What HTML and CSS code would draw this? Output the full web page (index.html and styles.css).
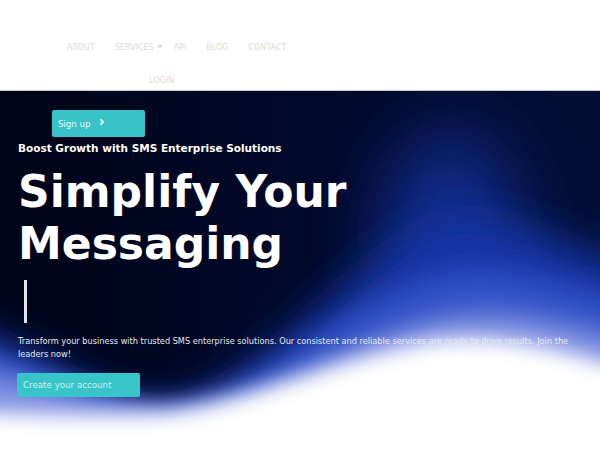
FILE: index.html
```html
<!DOCTYPE html>
<html lang="en">
<head>
<meta charset="utf-8">
<title>SMS Enterprise Solutions</title>
<link rel="stylesheet" href="styles.css">
</head>
<body>
<header class="site-header">
  <nav class="main-nav">
    <ul class="nav-list">
      <li class="nav-item"><a href="#">ABOUT</a></li>
      <li class="nav-item has-sub"><a href="#">SERVICES</a><span class="caret"></span></li>
      <li class="nav-item"><a href="#">API</a></li>
      <li class="nav-item"><a href="#">BLOG</a></li>
      <li class="nav-item"><a href="#">CONTACT</a></li>
      <li class="nav-item login"><a href="#">LOGIN</a></li>
    </ul>
  </nav>
</header>
<section class="hero">
  <svg class="hero-bg" viewBox="0 0 600 359" width="600" height="359" preserveAspectRatio="none" aria-hidden="true">
    <defs>
      <filter id="b35" filterUnits="userSpaceOnUse" x="-150" y="-150" width="900" height="700"><feGaussianBlur stdDeviation="35"/></filter>
      <filter id="b22" filterUnits="userSpaceOnUse" x="-150" y="-150" width="900" height="700"><feGaussianBlur stdDeviation="22"/></filter>
      <filter id="b14" filterUnits="userSpaceOnUse" x="-150" y="-150" width="900" height="700"><feGaussianBlur stdDeviation="14"/></filter>
      <filter id="b12" filterUnits="userSpaceOnUse" x="-150" y="-150" width="900" height="700"><feGaussianBlur stdDeviation="12"/></filter>
      <filter id="b10" filterUnits="userSpaceOnUse" x="-150" y="-150" width="900" height="700"><feGaussianBlur stdDeviation="10"/></filter>
      <linearGradient id="base" x1="0" y1="0" x2="1" y2="0">
        <stop offset="0" stop-color="#000417"/>
        <stop offset="0.6" stop-color="#020a2e"/>
        <stop offset="1" stop-color="#030e36"/>
      </linearGradient>
    </defs>
    <rect x="0" y="0" width="600" height="359" fill="url(#base)"/>
    <ellipse filter="url(#b35)" cx="450" cy="150" rx="70" ry="110" fill="#1838aa" opacity="0.75"/>
    <path filter="url(#b22)" fill="#1536a6" d="M-60,228 C40,255 100,318 160,318 C240,318 330,190 430,135 C490,110 540,150 660,185 L660,460 L-60,460 Z"/>
    <path filter="url(#b14)" fill="#3352c6" d="M-60,245 C40,270 100,318 165,316 C250,314 340,210 440,185 C510,170 570,200 660,220 L660,460 L-60,460 Z"/>
    <path filter="url(#b12)" fill="#8191e2" d="M-60,270 C40,290 110,320 175,318 C270,312 360,240 450,225 C530,214 580,240 660,255 L660,460 L-60,460 Z"/>
    <path filter="url(#b10)" fill="#ffffff" d="M-60,318 C40,324 100,324 160,322 C240,316 330,268 430,250 C500,240 560,258 660,288 L660,460 L-60,460 Z"/>
  </svg>
  <div class="hero-content">
    <a class="btn-signup" href="#">Sign up <svg class="chev" viewBox="0 0 8 10" width="6" height="8"><path d="M2 1.5 L5.5 5 L2 8.5" fill="none" stroke="#fff" stroke-width="2"/></svg></a>
    <p class="tagline">Boost Growth with SMS Enterprise Solutions</p>
    <h1 class="headline">Simplify Your<br>Messaging</h1>
    <div class="cursor"></div>
    <p class="lead">Transform your business with trusted SMS enterprise solutions. Our consistent and reliable services are ready to drive results. Join the leaders now!</p>
    <a class="btn-create" href="#">Create your account</a>
  </div>
</section>
</body>
</html>
```

FILE: styles.css
```css
* { box-sizing: border-box; }
html, body { margin: 0; padding: 0; }
body {
  font-family: "DejaVu Sans", Verdana, sans-serif;
  background: #ffffff;
  width: 600px;
  height: 450px;
  overflow: hidden;
}
a { text-decoration: none; color: inherit; }

.site-header {
  height: 91px;
  background: #ffffff;
  border-bottom: 1px solid #c8cacd;
}
.main-nav { padding-top: 42px; padding-left: 57px; }
.nav-list {
  list-style: none;
  margin: 0;
  padding: 0;
  width: 250px;
  display: flex;
  flex-wrap: wrap;
  row-gap: 21px;
}
.nav-item {
  font-size: 8px;
  line-height: 12px;
  color: #dcdcdc;
  padding: 0 10px;
  position: relative;
}
.nav-item.has-sub { padding-right: 1px; }
.caret {
  display: inline-block;
  width: 0; height: 0;
  border-left: 3px solid transparent;
  border-right: 3px solid transparent;
  border-top: 3px solid #d6d6d6;
  margin-left: 3px;
  vertical-align: middle;
  position: relative;
  top: -1px;
}
.nav-item.login { margin-left: 82px; }

.hero {
  position: relative;
  height: 359px;
  background: #020826;
  overflow: hidden;
}
.hero-bg {
  position: absolute;
  left: 0;
  top: 0;
  display: block;
}
.hero-content {
  position: relative;
  padding: 19px 18px 0 18px;
  color: #ffffff;
}
.btn-signup {
  display: flex;
  align-items: center;
  width: 93px;
  height: 27px;
  margin-left: 34px;
  padding-left: 6px;
  background: #37c3c8;
  border-radius: 2px;
  color: #eefcfc;
  font-size: 8.6px;
}
.chev { margin-left: 9px; margin-top: -4px; }
.tagline {
  margin: 4px 0 0 0;
  font-size: 10.5px;
  line-height: 14px;
  font-weight: bold;
  color: #ffffff;
}
.headline {
  margin: 11px 0 0 0;
  font-size: 44px;
  line-height: 52px;
  font-weight: bold;
  color: #ffffff;
}
.cursor {
  width: 3px;
  height: 43px;
  margin: 10px 0 0 6px;
  background: #e2e4ec;
}
.lead {
  margin: 12px 0 0 0;
  font-size: 8.2px;
  line-height: 12.5px;
  color: #e6e8f2;
  max-width: 566px;
}
.btn-create {
  display: flex;
  align-items: center;
  width: 123px;
  height: 24px;
  margin: 13px 0 0 -1px;
  padding-left: 6px;
  background: #37c5c9;
  border-radius: 2px;
  color: #cdeff0;
  font-size: 8.7px;
}
```
